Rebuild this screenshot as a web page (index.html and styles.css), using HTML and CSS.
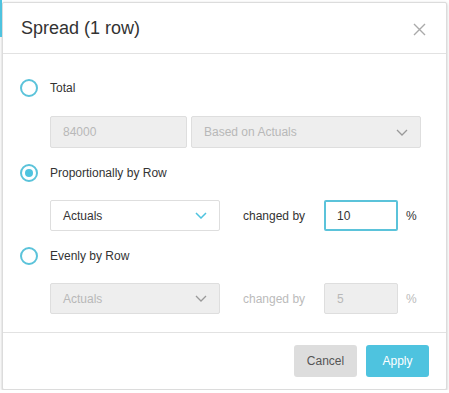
FILE: index.html
```html
<!DOCTYPE html>
<html lang="en">
<head>
    <meta charset="UTF-8">
    <meta name="viewport" content="width=device-width, initial-scale=1.0">
    <title>Spread</title>
    <link rel="stylesheet" href="styles.css">
</head>
<body>
    <div class="side-strip"></div>
    <div class="modal">
        <div class="modal-header">
            <h2 class="modal-title">Spread (1 row)</h2>
            <svg class="close" width="13" height="13" viewBox="0 0 13 13"><path d="M1 1l11 11M12 1L1 12" stroke="#aaa" stroke-width="1.4" fill="none"/></svg>
        </div>

        <div class="modal-body">
            <label class="option opt-total">
                <span class="radio"></span>
                <span>Total</span>
            </label>
            <div class="field-row row-total">
                <div class="input disabled w-total">84000</div>
                <div class="select disabled w-based">
                    <span>Based on Actuals</span>
                    <svg class="chevron" width="12" height="7" viewBox="0 0 12 7"><path d="M1 1l5 5 5-5" fill="none" stroke="#999" stroke-width="1.3"/></svg>
                </div>
            </div>

            <label class="option opt-prop">
                <span class="radio checked"></span>
                <span>Proportionally by Row</span>
            </label>
            <div class="field-row row-prop">
                <div class="select w-actuals">
                    <span>Actuals</span>
                    <svg class="chevron" width="12" height="7" viewBox="0 0 12 7"><path d="M1 1l5 5 5-5" fill="none" stroke="#4ec3df" stroke-width="1.5"/></svg>
                </div>
                <span class="changed">changed by</span>
                <div class="input focused w-pct">10</div>
                <span class="pct">%</span>
            </div>

            <label class="option opt-even">
                <span class="radio"></span>
                <span>Evenly by Row</span>
            </label>
            <div class="field-row row-even">
                <div class="select disabled w-actuals">
                    <span>Actuals</span>
                    <svg class="chevron" width="12" height="7" viewBox="0 0 12 7"><path d="M1 1l5 5 5-5" fill="none" stroke="#999" stroke-width="1.3"/></svg>
                </div>
                <span class="changed muted">changed by</span>
                <div class="input disabled w-pct">5</div>
                <span class="pct muted">%</span>
            </div>
        </div>

        <div class="modal-footer">
            <button class="btn btn-cancel">Cancel</button>
            <button class="btn btn-apply">Apply</button>
        </div>
    </div>
</body>
</html>
```

FILE: styles.css
```css
body {
    margin: 0;
    background-color: #fff;
    font-family: "Liberation Sans", Arial, sans-serif;
    color: #333;
}

.side-strip {
    position: absolute;
    left: 0;
    top: 0;
    width: 2px;
    height: 37px;
    background-color: #4ec3df;
}

.modal {
    margin: 2px 0 0 2px;
    width: 445px;
    height: 388px;
    box-sizing: border-box;
    border: 1px solid #dcdcdc;
    border-radius: 2px;
    background-color: #fff;
    box-shadow: 0 1px 3px rgba(0, 0, 0, 0.25);
    display: flex;
    flex-direction: column;
}

.modal-header {
    height: 51px;
    box-sizing: border-box;
    border-bottom: 1px solid #e2e2e2;
    display: flex;
    align-items: center;
    justify-content: space-between;
    padding: 0 20px 0 18px;
}

.modal-title {
    margin: 0;
    font-size: 18px;
    font-weight: normal;
    color: #333;
}

.close {
    margin-top: 2px;
}

.modal-body {
    padding: 24px 17px 0;
    height: 279px;
    box-sizing: border-box;
    border-bottom: 1px solid #e2e2e2;
}

.option {
    display: flex;
    align-items: center;
    height: 20px;
    font-size: 12px;
    color: #333;
}

.radio {
    width: 18px;
    height: 18px;
    box-sizing: border-box;
    border: 2px solid #5bc3da;
    border-radius: 50%;
    margin-right: 12px;
    position: relative;
}

.radio.checked::after {
    content: "";
    position: absolute;
    left: 3px;
    top: 3px;
    width: 8px;
    height: 8px;
    border-radius: 50%;
    background-color: #4ec3df;
}

.field-row {
    display: flex;
    align-items: center;
    margin-left: 30px;
    font-size: 12px;
}

.row-total {
    margin-top: 18px;
    margin-bottom: 15px;
}

.row-total .input,
.row-total .select {
    height: 32px;
}

.row-prop {
    margin-top: 17px;
    margin-bottom: 15px;
}

.row-even {
    margin-top: 17px;
}

.input,
.select {
    height: 31px;
    box-sizing: border-box;
    border: 1px solid #dedede;
    border-radius: 2px;
    background-color: #fff;
    display: flex;
    align-items: center;
    padding: 0 12px;
    color: #333;
}

.select {
    justify-content: space-between;
}

.disabled {
    background-color: #eee;
    color: #b8b8b8;
}

.focused {
    border: 2px solid #5bc3da;
    padding: 0 11px;
}

.w-total {
    width: 137px;
}

.w-based {
    width: 230px;
    margin-left: 4px;
}

.w-actuals {
    width: 170px;
}

.w-pct {
    width: 74px;
}

.changed {
    margin: 0 19px 0 23px;
    color: #333;
}

.pct {
    margin-left: 8px;
    color: #333;
}

.muted {
    color: #bbb;
}

.modal-footer {
    display: flex;
    justify-content: flex-end;
    padding: 12px 17px 0;
    gap: 9px;
}

.btn {
    width: 63px;
    height: 32px;
    border: none;
    border-radius: 3px;
    font-family: "Liberation Sans", Arial, sans-serif;
    font-size: 12px;
}

.btn-cancel {
    background-color: #ddd;
    color: #555;
}

.btn-apply {
    background-color: #4ec3df;
    color: #fff;
}
```
